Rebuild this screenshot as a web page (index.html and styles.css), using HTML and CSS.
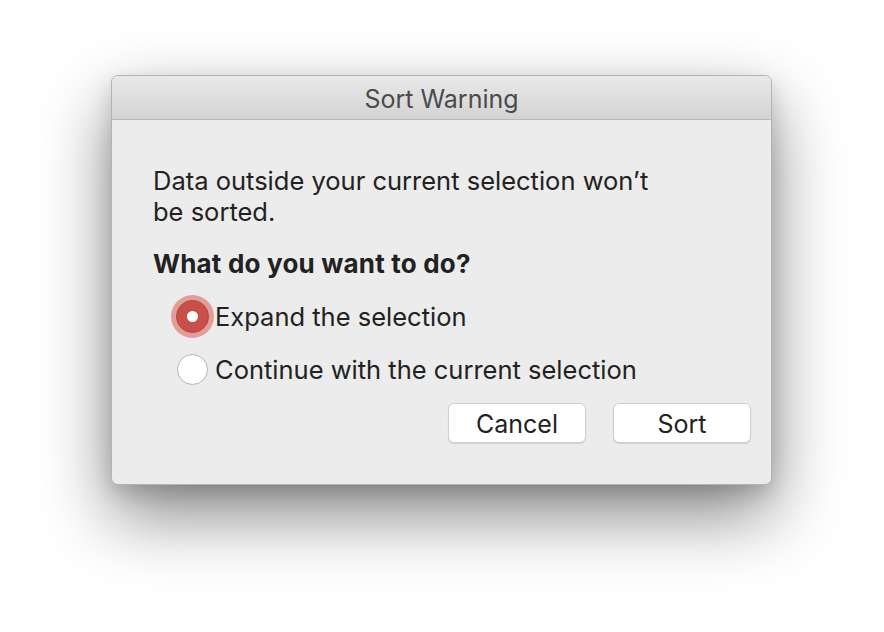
FILE: index.html
```html
<!DOCTYPE html>
<html>
<head>
<meta charset="utf-8">
<link rel="stylesheet" href="styles.css">
</head>
<body>
<div class="dialog">
  <div class="titlebar">Sort Warning</div>
  <div class="content">
    <p class="message">Data outside your current selection won’t<br>be sorted.</p>
    <p class="question">What do you want to do?</p>
    <div class="options">
      <label class="option">
        <span class="radio checked"><span class="dot"></span></span>
        <span class="label">Expand the selection</span>
      </label>
      <label class="option">
        <span class="radio"></span>
        <span class="label">Continue with the current selection</span>
      </label>
    </div>
    <div class="buttons">
      <button class="btn">Cancel</button>
      <button class="btn">Sort</button>
    </div>
  </div>
</div>
</body>
</html>
```

FILE: styles.css
```css
html, body {
  margin: 0;
  padding: 0;
  background: #ffffff;
}
html {
  height: 100%;
}
body {
  min-height: 632px;
  box-sizing: border-box;
  padding: 75px 0 0 111px;
  font-family: "Inter", "Roboto", sans-serif;
  color: #222222;
}
.dialog {
  width: 661px;
  height: 410px;
  box-sizing: border-box;
  background: #ececec;
  border-radius: 7px;
  border: 1px solid #b3b3b3;
  box-shadow: 0 30px 70px rgba(0, 0, 0, 0.48), 0 8px 20px rgba(0, 0, 0, 0.14);
  overflow: hidden;
  display: flex;
  flex-direction: column;
}
.titlebar {
  flex: none;
  height: 44px;
  box-sizing: border-box;
  padding-top: 3px;
  background: linear-gradient(#e9e9e9, #d3d3d3);
  border-bottom: 1px solid #b8b8b8;
  display: flex;
  align-items: center;
  justify-content: center;
  font-size: 25px;
  color: #4b4b4b;
}
.content {
  flex: 1;
  padding: 45px 20px 0 41px;
  display: flex;
  flex-direction: column;
}
.message {
  margin: 0;
  font-size: 25.5px;
  line-height: 31px;
  color: #222;
}
.question {
  margin: 21px 0 0 0;
  font-size: 26px;
  letter-spacing: 0.2px;
  line-height: 31px;
  font-weight: 700;
  color: #222;
}
.options {
  margin-top: 16px;
  display: flex;
  flex-direction: column;
  gap: 11px;
}
.option {
  display: flex;
  align-items: center;
  height: 42px;
  padding-left: 24px;
  font-size: 25.5px;
  color: #222;
}
.radio {
  width: 31px;
  height: 31px;
  box-sizing: border-box;
  border-radius: 50%;
  background: #ffffff;
  border: 1px solid #b5b5b5;
  display: flex;
  align-items: center;
  justify-content: center;
  margin-right: 7px;
  flex: none;
}
.radio.checked {
  width: 33px;
  height: 33px;
  margin-left: -1px;
  margin-right: 6px;
  background: #c9504a;
  border: 1px solid #b4433d;
  box-shadow: 0 0 0 5px #e29d99;
}
.dot {
  width: 11px;
  height: 11px;
  border-radius: 50%;
  background: #ffffff;
}
.buttons {
  margin-top: 13px;
  display: flex;
  justify-content: flex-end;
  gap: 27px;
}
.btn {
  width: 138px;
  height: 40px;
  padding: 2px 0 0 0;
  background: #ffffff;
  border: 1px solid #cfcfcf;
  border-radius: 6px;
  box-shadow: 0 1px 1px rgba(0, 0, 0, 0.12);
  font-family: "Inter", "Roboto", sans-serif;
  font-size: 25px;
  color: #222;
}
```
